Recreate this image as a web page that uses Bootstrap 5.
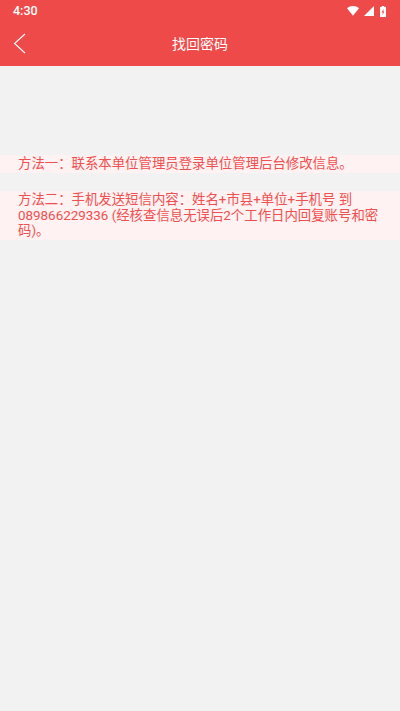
<!DOCTYPE html>
<html lang="zh">
<head>
<meta charset="utf-8">
<link href="https://cdn.jsdelivr.net/npm/bootstrap@5.3.0/dist/css/bootstrap.min.css" rel="stylesheet">
<style>
html,body{height:100%}
body{background:#f2f2f2;font-family:Roboto,"Noto Sans CJK SC",sans-serif;overflow:hidden}
.hdr{background:#ef4a4a;height:66px;color:#fff}
.stat{height:22px;padding:0 14px 0 13px}
.clock{font-size:12.5px;font-weight:500;line-height:22px}
.wifi{margin-right:5px}
.sig{margin-right:6px}
.bar{height:44px;position:relative}
.ttl{font-size:14px;line-height:44px}
.back{position:absolute;left:13px;top:11px}
.notes{padding-top:89px}
.note{background:#fff2f2;color:#f04f4f;font-size:13.4px;line-height:15.5px;padding:1px 18px 1.5px;margin-bottom:18px}
</style>
</head>
<body>
<div class="hdr">
  <div class="stat d-flex align-items-center justify-content-between">
    <span class="clock">4:30</span>
    <span class="d-flex align-items-center">
      <svg class="wifi" width="12" height="10" viewBox="0 0 14 11" preserveAspectRatio="none"><path fill="#fff" d="M0 2.5C4-.8 10-.8 14 2.5L7 10.8z"/></svg>
      <svg class="sig" width="10" height="10" viewBox="0 0 10 10"><path fill="#fff" d="M10 0V10H0z"/></svg>
      <svg width="6" height="11" viewBox="0 0 7 12" preserveAspectRatio="none"><path fill="#fff" fill-rule="evenodd" d="M2 0H5V1H7V12H0V1H2zM4 3 2 7H3.2L3 10 5 5.8H3.8z"/></svg>
    </span>
  </div>
  <div class="bar text-center">
    <svg class="back" width="13" height="22" viewBox="0 0 13 22"><path d="M12 1 1.5 10.5 12 20" fill="none" stroke="#fff" stroke-width="1.1"/></svg>
    <span class="ttl">找回密码</span>
  </div>
</div>
<div class="notes">
  <div class="note">方法一：联系本单位管理员登录单位管理后台修改信息。</div>
  <div class="note">方法二：手机发送短信内容：姓名+市县+单位+手机号 到089866229336 (经核查信息无误后2个工作日内回复账号和密码)。</div>
</div>
<script src="https://cdn.jsdelivr.net/npm/bootstrap@5.3.0/dist/js/bootstrap.bundle.min.js"></script>
</body>
</html>
